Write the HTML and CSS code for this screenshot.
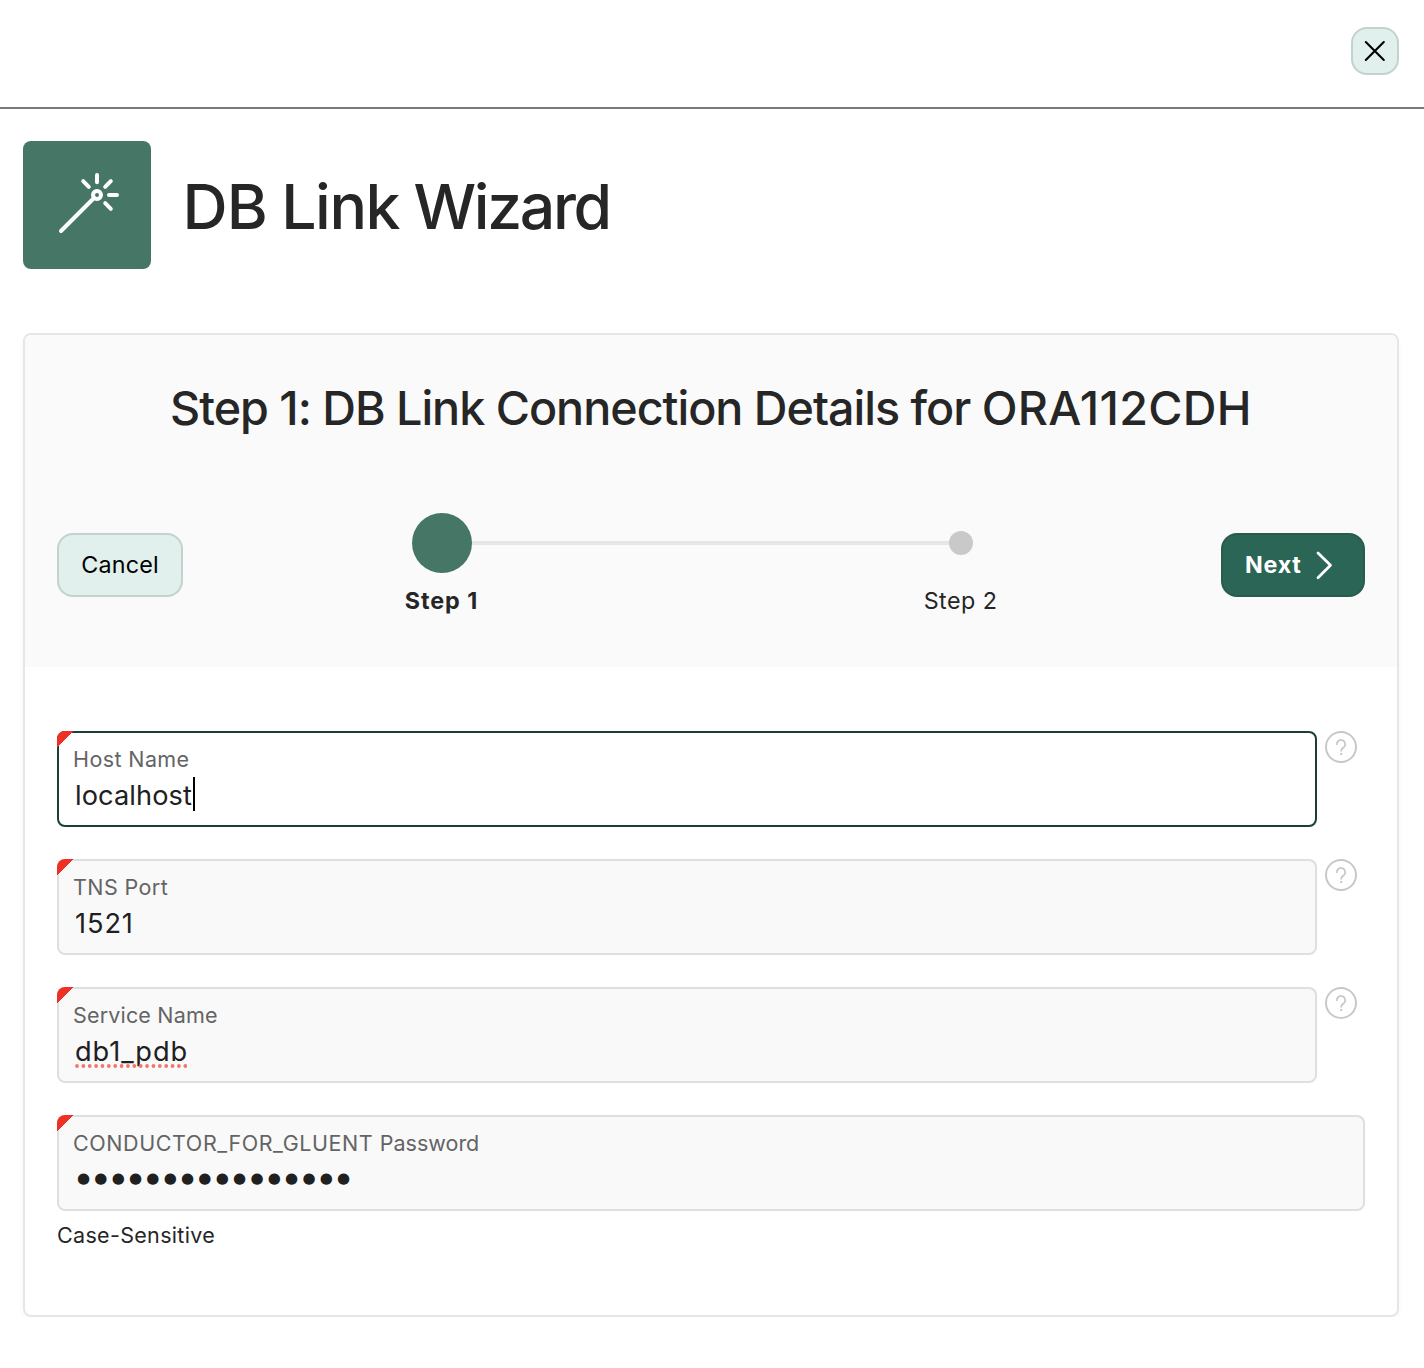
FILE: index.html
```html
<!DOCTYPE html>
<html lang="en">
<head>
<meta charset="utf-8">
<title>DB Link Wizard</title>
<link rel="stylesheet" href="styles.css">
</head>
<body>
<header class="topbar">
  <button class="close" aria-label="Close"><svg width="44" height="44" viewBox="0 0 44 44"><path d="M12.8 13 30.8 31M30.8 13 12.8 31"/></svg></button>
</header>
<main class="page">
  <div class="hero">
    <div class="hero-icon"><svg width="128" height="128" viewBox="0 0 128 128"><circle cx="74" cy="54" r="4"/><path d="M38 90 71 57M74 34v7.2M60.2 40.2l5.6 5.6M87.8 40.2l-5.6 5.6M86 54h8M82.2 62.2l5.6 5.6"/></svg></div>
    <h1 class="title"><span class="w-db">DB</span> <span class="w-link">Link</span> <span class="w-wiz">Wizard</span></h1>
  </div>
  <section class="card">
    <div class="card-head">
      <h2 class="step-title">Step 1: DB Link Connection Details for <span class="db-name">ORA112CDH</span></h2>
      <div class="wizard">
        <button class="btn btn-cancel"><span>Cancel</span></button>
        <ol class="steps">
          <li class="step step-current"><span class="marker"></span><span class="step-label">Step 1</span></li>
          <li class="track"></li>
          <li class="step"><span class="marker"></span><span class="step-label">Step 2</span></li>
        </ol>
        <button class="btn btn-next"><span>Next</span><svg width="32" height="32" viewBox="0 0 32 32"><path d="M10 4 22.5 16.3 10 28.8"/></svg></button>
      </div>
    </div>
    <form class="form">
      <div class="row">
        <div class="field focused"><span class="label">Host Name</span><span class="value"><span class="v-host">localhost</span><i class="caret"></i></span></div>
        <svg class="help" width="32" height="32" viewBox="0 0 32 32"><circle cx="16" cy="16" r="15"/><path d="M11.8 13.2a4.2 4.2 0 1 1 7 3.1c-1.7 1.4-2.6 1.9-2.6 3.5"/><circle class="dot" cx="16.2" cy="22.9" r="1.2"/></svg>
      </div>
      <div class="row">
        <div class="field"><span class="label">TNS Port</span><span class="value"><span class="v-port">1521</span></span></div>
        <svg class="help" width="32" height="32" viewBox="0 0 32 32"><circle cx="16" cy="16" r="15"/><path d="M11.8 13.2a4.2 4.2 0 1 1 7 3.1c-1.7 1.4-2.6 1.9-2.6 3.5"/><circle class="dot" cx="16.2" cy="22.9" r="1.2"/></svg>
      </div>
      <div class="row">
        <div class="field"><span class="label l-service">Service Name</span><span class="value"><span class="v-service">db1_pdb<svg class="squiggle" width="112" height="4" viewBox="0 0 112 4"><path d="M2 2H111"/></svg></span></span></div>
        <svg class="help" width="32" height="32" viewBox="0 0 32 32"><circle cx="16" cy="16" r="15"/><path d="M11.8 13.2a4.2 4.2 0 1 1 7 3.1c-1.7 1.4-2.6 1.9-2.6 3.5"/><circle class="dot" cx="16.2" cy="22.9" r="1.2"/></svg>
      </div>
      <div class="row row-full">
        <div class="field"><span class="label"><span class="l-user">CONDUCTOR_FOR_GLUENT</span> <span class="l-pass">Password</span></span><span class="value dots">●●●●●●●●●●●●●●●●</span></div>
      </div>
      <p class="hint">Case-Sensitive</p>
    </form>
  </section>
</main>
</body>
</html>
```
FILE: styles.css
```css
* { box-sizing: border-box; }
body {
  margin: 0;
  background: #fff;
  color: #262626;
  font-family: Inter, "Liberation Sans", sans-serif;
}
svg { display: block; fill: none; stroke-linecap: round; stroke-linejoin: round; }
button { font: inherit; padding: 0; margin: 0; }
.topbar {
  height: 109px;
  padding: 27px 25px 0 0;
  border-bottom: 2px solid #7a7a7a;
  display: flex;
  justify-content: flex-end;
  align-items: flex-start;
}
.close {
  width: 48px;
  height: 48px;
  border: 2px solid #c2d2ce;
  border-radius: 16px;
  background: #e1f0ec;
}
.close path { stroke: #000; stroke-width: 2.1; }
.page { padding: 32px 25px 0 23px; }
.hero { display: flex; gap: 31.5px; height: 128px; }
.hero-icon {
  width: 128px;
  height: 128px;
  border-radius: 8px;
  background: #467665;
}
.hero-icon svg { stroke: #fff; stroke-width: 4; }
.title {
  margin: 0;
  padding-top: 1px;
  font-size: 62.5px;
  font-weight: 500;
  line-height: 128px;
  letter-spacing: -0.9px;
  word-spacing: -1.5px;
  white-space: nowrap;
}
.w-link { letter-spacing: -1.4px; }
.w-wiz { letter-spacing: -2.35px; }
.card {
  margin-top: 64px;
  height: 984px;
  border: 2px solid #e6e6e6;
  border-radius: 8px;
  box-shadow: 0 4px 8px -2px rgba(0, 0, 0, 0.06);
}
.card-head {
  height: 332px;
  background: #fafafa;
  padding: 31px 32px 0;
  border-radius: 6px 6px 0 0;
}
.step-title {
  margin: 0;
  height: 84px;
  font-size: 46.7px;
  font-weight: 500;
  line-height: 84px;
  letter-spacing: -1.02px;
  text-align: center;
  white-space: nowrap;
}
.db-name { letter-spacing: 0.3px; }
.wizard {
  margin-top: 63px;
  height: 104px;
  display: flex;
  justify-content: space-between;
}
.btn {
  height: 64px;
  margin-top: 20px;
  border-radius: 16px;
  font-size: 23.3px;
  line-height: 60px;
  display: flex;
  align-items: center;
}
.btn-cancel {
  width: 126px;
  justify-content: center;
  border: 2px solid #c2d2ce;
  background: #e1f0ec;
  color: #000;
  letter-spacing: 0.2px;
}
.btn-next {
  width: 144px;
  padding-left: 22px;
  gap: 6px;
  border: 2px solid #285c4e;
  background: #2b6555;
  color: #fff;
  font-weight: 700;
  letter-spacing: 0.75px;
}
.btn-next path { stroke: #fff; stroke-width: 2.8; }
.steps {
  list-style: none;
  width: 619px;
  margin: 0 2px 0 0;
  padding: 0;
  display: flex;
}
.step {
  width: 100px;
  height: 104px;
  flex: none;
  display: flex;
  flex-direction: column;
  align-items: center;
  padding-top: 18px;
}
.marker { width: 24px; height: 24px; border-radius: 50%; background: #c9c9c9; }
.step-label { margin-top: 30px; font-size: 23.3px; line-height: 32px; white-space: nowrap; letter-spacing: 0.45px; }
.step-current { padding-top: 0; }
.step-current .marker { width: 60px; height: 60px; background: #467665; }
.step-current .step-label { margin-top: 12px; font-weight: 700; letter-spacing: 1px; }
.track { height: 4px; margin: 28px -38px 0 -20px; flex: 1; background: #e6e6e6; }
.form { padding: 64px 32px 0; display: flex; flex-direction: column; gap: 32px; }
.row { display: flex; gap: 8px; padding-right: 8px; }
.row-full { padding-right: 0; }
.field {
  position: relative;
  flex: 1;
  height: 96px;
  padding: 12px 14px 0;
  border: 2px solid #dfdfdf;
  border-radius: 8px;
  background: #f9f9f9;
  display: flex;
  flex-direction: column;
}
.field::before {
  content: "";
  position: absolute;
  left: -2px;
  top: -2px;
  width: 16px;
  height: 16px;
  border-radius: 8px 0 0 0;
  background: linear-gradient(135deg, #ee3124 51%, transparent 52%);
}
.focused { border-color: #1a4034; background: #fff; }
.label { font-size: 21.5px; line-height: 28px; color: #646464; letter-spacing: 0.4px; white-space: nowrap; }
.l-service { letter-spacing: 0.17px; }
.l-user { letter-spacing: 0.58px; }
.l-pass { letter-spacing: 0; }
.value { display: flex; align-items: center; padding-left: 2px; margin-top: 6px; height: 34px; font-size: 27.2px; line-height: 34px; color: #202020; }
.v-host { letter-spacing: 0.1px; }
.v-port { letter-spacing: 0.9px; }
.caret { width: 2px; height: 34px; margin: -4px 0 0 1px; background: #000; }
.v-service { position: relative; letter-spacing: 0.9px; }
.squiggle { position: absolute; left: 0; top: 29px; }
.squiggle path { stroke: #f0776d; stroke-width: 3.8; stroke-dasharray: 0 6.37; }
.dots { margin-top: 4px; padding-left: 4px; font-family: "DejaVu Sans", sans-serif; font-size: 15px; letter-spacing: 4.25px; }
.help { flex: none; stroke: #c8c8c8; stroke-width: 2; }
.help path { stroke-width: 1.8; }
.help .dot { fill: #c8c8c8; stroke: none; }
.hint { margin: -22px 0 0; font-size: 21.5px; line-height: 28px; letter-spacing: 0.32px; }
```
